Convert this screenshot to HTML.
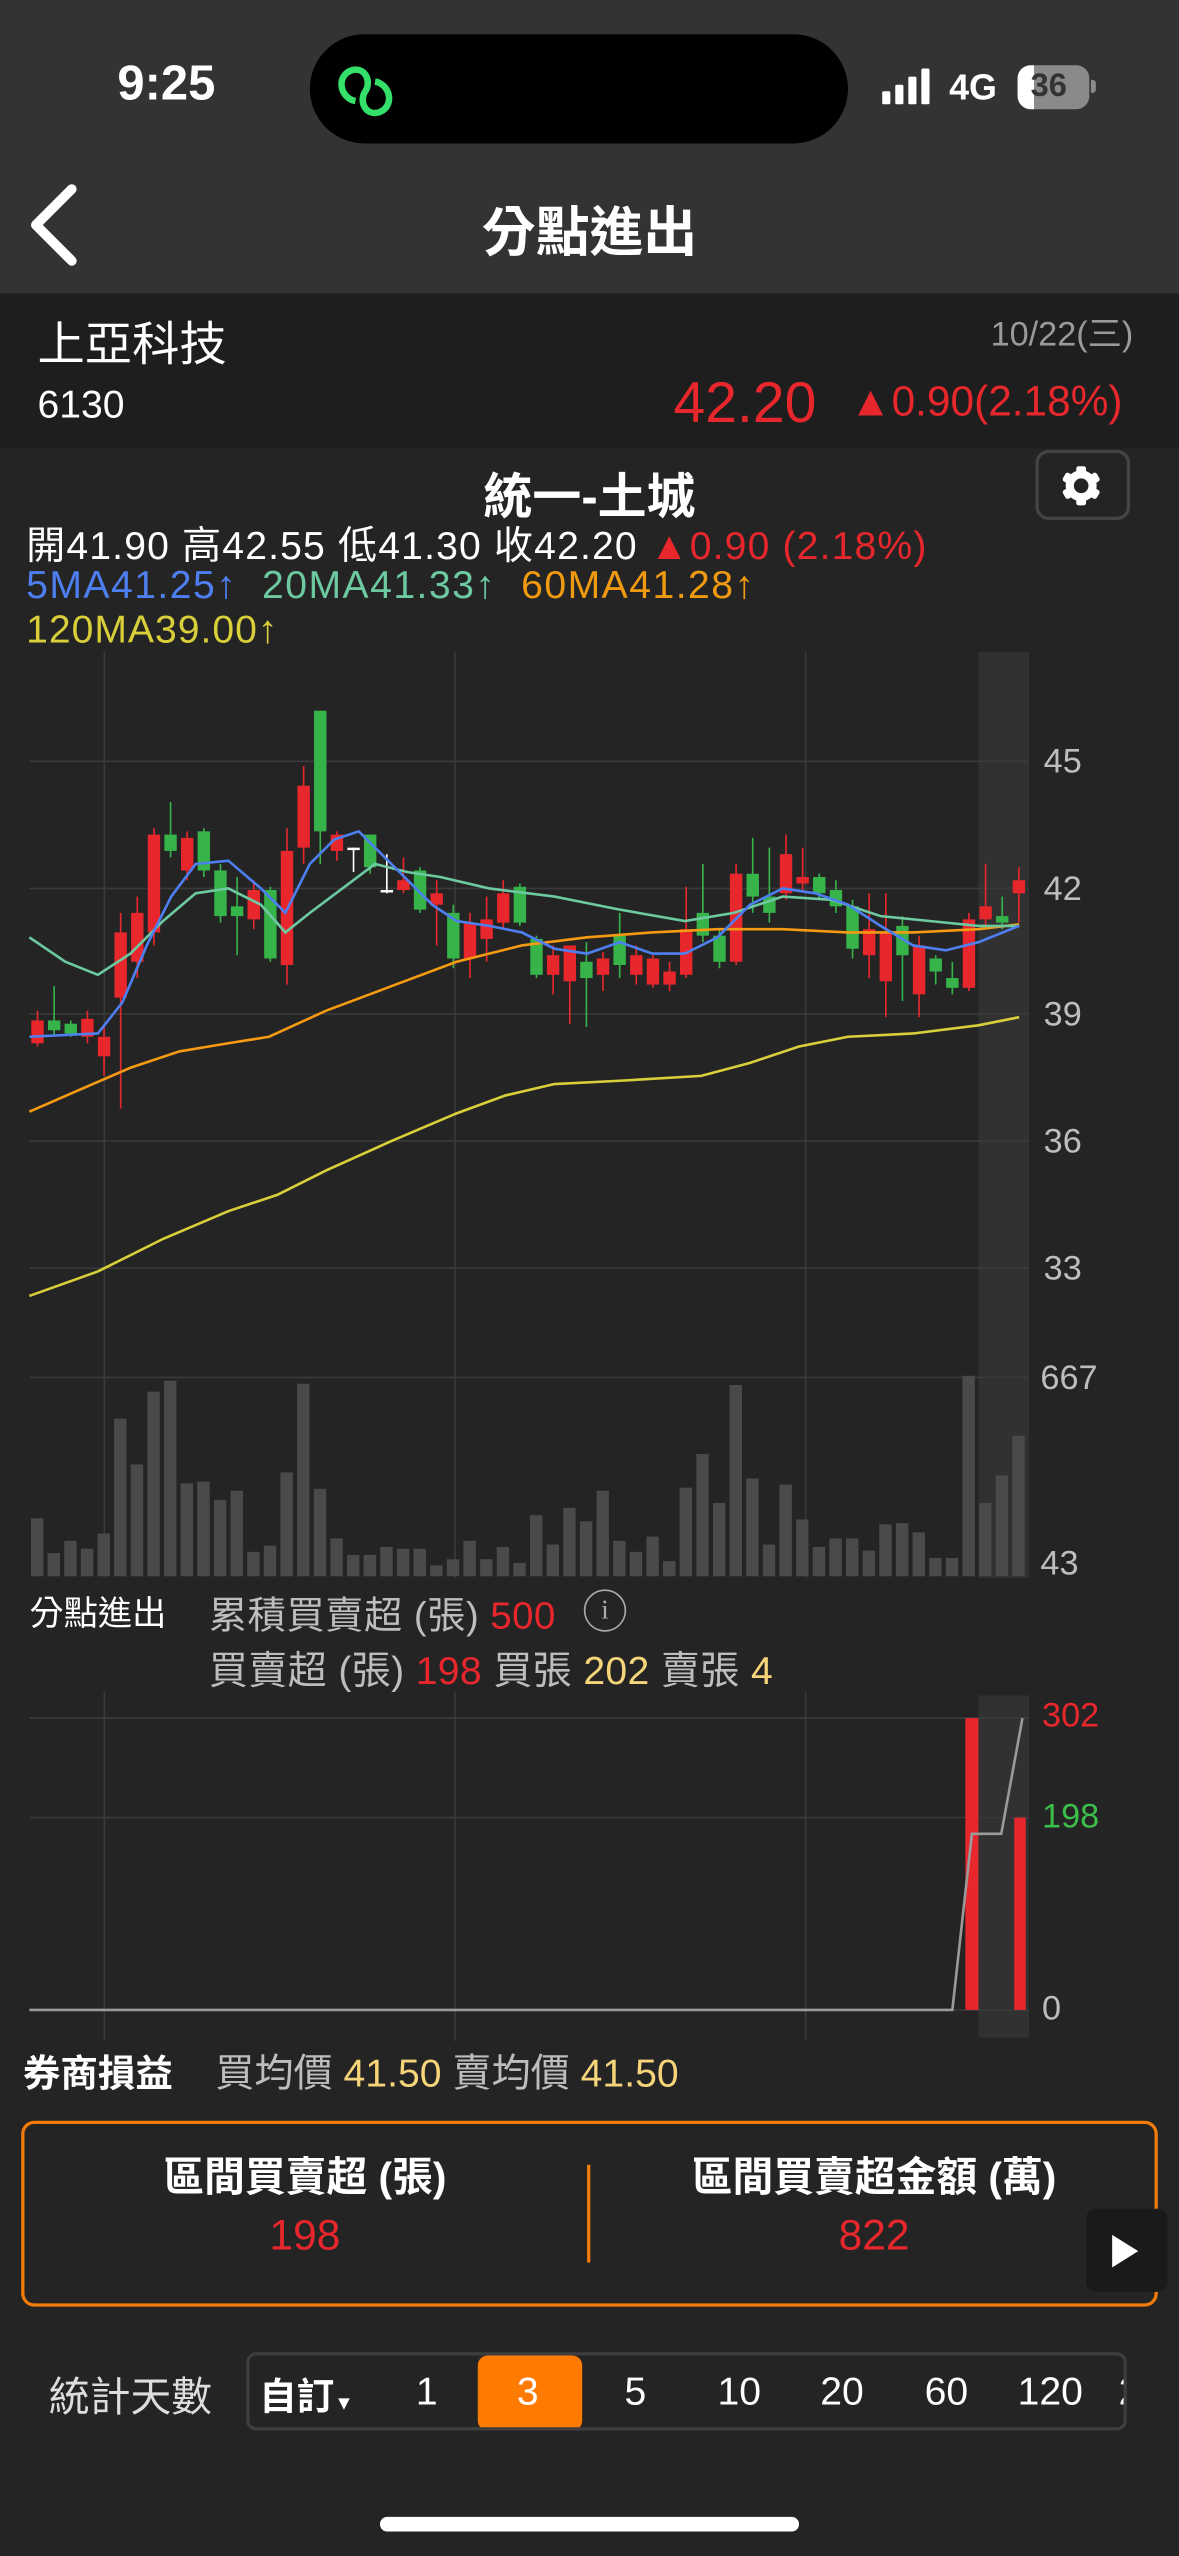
<!DOCTYPE html>
<html><head><meta charset="utf-8">
<style>
*{margin:0;padding:0;box-sizing:border-box}
html,body{width:1179px;height:2556px;overflow:hidden;background:#242424}
#w{position:absolute;left:0;top:0;width:723px;height:1568px;transform-origin:0 0;transform:scale(1.63071,1.6301);background:#242424;font-family:"Liberation Sans","Noto Sans CJK TC",sans-serif;color:#fff}
.a{position:absolute;white-space:nowrap}
.r{color:#e8272d}.y{color:#f5d47a}.g{color:#bdbdbd}
</style></head><body><div id="w">
<div class="a" style="left:0;top:0;width:723px;height:180px;background:#333"></div>
<div class="a" style="left:72px;top:35px;font-size:30px;font-weight:bold">9:25</div>
<div class="a" style="left:190px;top:21px;width:330px;height:67px;border-radius:34px;background:#000"></div>
<svg class="a" style="left:204px;top:38px" width="44" height="36" viewBox="0 0 44 36"><g fill="none" stroke="#35e06a" stroke-width="4"><path d="M14 24 C4 22 2 8 12 5 C20 3 24 12 20 18"/><path d="M26 12 C36 14 38 28 28 31 C20 33 16 24 20 18"/></g></svg>
<svg class="a" style="left:540px;top:42px" width="36" height="22"><rect x="1" y="14" width="5" height="8" rx="1" fill="#fff"/><rect x="9" y="10" width="5" height="12" rx="1" fill="#fff"/><rect x="17" y="5" width="5" height="17" rx="1" fill="#fff"/><rect x="25" y="0" width="5" height="22" rx="1" fill="#fff"/></svg>
<div class="a" style="left:582px;top:41px;font-size:22px;font-weight:bold">4G</div>
<div class="a" style="left:624px;top:40px;width:44px;height:27px;border-radius:8px;background:linear-gradient(90deg,#fff 0,#fff 10px,#8a8a8a 10px)"></div>
<div class="a" style="left:632px;top:42px;font-size:20px;font-weight:bold;color:#333">36</div>
<div class="a" style="left:669px;top:49px;width:3px;height:8px;background:#8a8a8a;border-radius:0 2px 2px 0"></div>
<svg class="a" style="left:14px;top:112px" width="34" height="52"><path d="M30 4 L8 26 L30 48" fill="none" stroke="#fff" stroke-width="6" stroke-linecap="round" stroke-linejoin="round"/></svg>
<div class="a" style="left:0;width:723px;text-align:center;top:116px;font-size:33px;font-weight:bold">分點進出</div>
<div class="a" style="left:0;top:180px;width:723px;height:95px;background:#1e1e1e"></div>
<div class="a" style="left:23px;top:188px;font-size:29px">上亞科技</div>
<div class="a" style="left:23px;top:235px;font-size:24px">6130</div>
<div class="a g" style="right:28px;top:189px;font-size:21px;color:#9a9a9a">10/22(三)</div>
<div class="a r" style="left:413px;top:228px;font-size:35px">42.20</div>
<div class="a r" style="left:521px;top:231px;font-size:26px">▲0.90(2.18%)</div>
<div class="a" style="left:0;width:723px;text-align:center;top:280px;font-size:30px;font-weight:bold">統一-土城</div>
<div class="a" style="left:635px;top:276px;width:58px;height:43px;border:2px solid #444;border-radius:8px"></div>
<svg class="a" style="left:649px;top:284px" width="28" height="28" viewBox="0 0 28 28"><g fill="#fff"><circle cx="14" cy="14" r="9.5"/><g id="t"><rect x="11" y="2" width="6" height="24" rx="1.5"/></g><use href="#t" transform="rotate(60 14 14)"/><use href="#t" transform="rotate(120 14 14)"/></g><circle cx="14" cy="14" r="4.5" fill="#242424"/></svg>
<div class="a" style="left:16px;top:315px;font-size:24px;letter-spacing:0.7px">開41.90 高42.55 低41.30 收42.20 <span class="r">▲0.90 (2.18%)</span></div>
<div class="a" style="left:16px;top:346px;font-size:24px;letter-spacing:0.9px"><span style="color:#4e7ff0">5MA41.25↑</span>&nbsp; <span style="color:#6cc9a0">20MA41.33↑</span>&nbsp; <span style="color:#f09a10">60MA41.28↑</span></div>
<div class="a" style="left:16px;top:373px;font-size:24px;letter-spacing:0.6px;color:#d8cf3a">120MA39.00↑</div>
<svg id="ch" class="a" style="left:0;top:395px" width="723" height="860" viewBox="0 395 723 860"></svg>
<div class="a g" style="left:640px;top:456px;font-size:21px">45</div>
<div class="a g" style="left:640px;top:534px;font-size:21px">42</div>
<div class="a g" style="left:640px;top:611px;font-size:21px">39</div>
<div class="a g" style="left:640px;top:689px;font-size:21px">36</div>
<div class="a g" style="left:640px;top:767px;font-size:21px">33</div>
<div class="a g" style="left:638px;top:834px;font-size:21px">667</div>
<div class="a g" style="left:638px;top:948px;font-size:21px">43</div>
<div class="a" style="left:18px;top:974px;font-size:21px">分點進出</div>
<div class="a g" style="left:128px;top:972px;font-size:23.5px;letter-spacing:0.3px">累積買賣超 (張) <span class="r">500</span></div>
<div class="a" style="left:358px;top:975px;width:26px;height:26px;border:1.5px solid #aaa;border-radius:50%;color:#aaa;font-size:17px;text-align:center;line-height:23px;font-family:'Liberation Serif',serif">i</div>
<div class="a g" style="left:128px;top:1005px;font-size:24px;letter-spacing:0.2px">買賣超 (張) <span class="r">198</span> 買張 <span class="y">202</span> 賣張 <span class="y">4</span></div>
<div class="a r" style="left:639px;top:1041px;font-size:21px">302</div>
<div class="a" style="left:639px;top:1103px;font-size:21px;color:#3cbf4a">198</div>
<div class="a g" style="left:639px;top:1221px;font-size:21px">0</div>
<div class="a" style="left:14px;top:1253px;font-size:23px;font-weight:bold">券商損益</div>
<div class="a g" style="left:132px;top:1252px;font-size:24px">買均價 <span class="y">41.50</span> 賣均價 <span class="y">41.50</span></div>
<div class="a" style="left:13px;top:1301px;width:697px;height:114px;border:2px solid #f27c0a;border-radius:8px"></div>
<div class="a" style="left:360px;top:1328px;width:2px;height:60px;background:#f27c0a"></div>
<div class="a" style="left:13px;width:348px;text-align:center;top:1316px;font-size:25px;font-weight:bold">區間買賣超 (張)</div>
<div class="a r" style="left:13px;width:348px;text-align:center;top:1356px;font-size:26px">198</div>
<div class="a" style="left:362px;width:348px;text-align:center;top:1316px;font-size:25px;font-weight:bold">區間買賣超金額 (萬)</div>
<div class="a r" style="left:362px;width:348px;text-align:center;top:1356px;font-size:26px">822</div>
<div class="a" style="left:666px;top:1355px;width:50px;height:51px;background:#1a1a1a;border-radius:6px"></div>
<svg class="a" style="left:680px;top:1369px" width="20" height="24"><path d="M2 2 L18 12 L2 22Z" fill="#fff"/></svg>
<div class="a" style="left:30px;top:1451px;font-size:25px;color:#ddd">統計天數</div>
<div class="a" style="left:151px;top:1443px;width:540px;height:48px;border:2px solid #3e3e3e;border-radius:6px;overflow:hidden">
<div class="a" style="left:140px;top:0;width:64px;height:46px;background:#ff7a00;border-radius:6px"></div>
<div class="a" style="left:6px;top:6px;font-size:23px;font-weight:bold">自訂<span style="font-size:12px">▼</span></div>
<div class="a" style="left:102px;top:9px;font-size:24px">1</div>
<div class="a" style="left:164px;top:9px;font-size:24px">3</div>
<div class="a" style="left:230px;top:9px;font-size:24px">5</div>
<div class="a" style="left:287px;top:9px;font-size:24px">10</div>
<div class="a" style="left:350px;top:9px;font-size:24px">20</div>
<div class="a" style="left:414px;top:9px;font-size:24px">60</div>
<div class="a" style="left:471px;top:9px;font-size:24px">120</div>
<div class="a" style="left:533px;top:9px;font-size:24px">2</div>
</div>
<div class="a" style="left:233px;top:1544px;width:257px;height:9px;border-radius:5px;background:#fff"></div>
</div>
<script>
var s='';
s+='<rect x="600" y="400" width="31" height="568" fill="#313131"/>';
s+='<rect x="600" y="1040" width="31" height="210" fill="#313131"/>';
[64,279,494].forEach(function(x){s+='<line x1="'+x+'" y1="400" x2="'+x+'" y2="968" stroke="#3a3a3a"/><line x1="'+x+'" y1="1038" x2="'+x+'" y2="1252" stroke="#3a3a3a"/>';});
[467,545,622,700,778,845].forEach(function(y){s+='<line x1="18" y1="'+y+'" x2="631" y2="'+y+'" stroke="#3a3a3a"/>';});
[1054,1115,1233].forEach(function(y){s+='<line x1="18" y1="'+y+'" x2="631" y2="'+y+'" stroke="#3a3a3a"/>';});
var v=[95,38,58,45,70,258,183,302,320,152,155,125,140,40,50,170,315,143,62,35,35,48,45,45,18,28,58,28,48,22,100,52,112,90,140,58,40,65,25,145,200,120,313,160,52,150,93,48,62,62,42,85,87,72,30,30,328,120,165,230];
v.forEach(function(h,i){var x=19+i*10.2,hh=h*0.375;s+='<rect x="'+x+'" y="'+(967-hh)+'" width="7.6" height="'+hh+'" fill="#4a4a4a"/>';});
var c=[[626,640,620,642,'r'],[626,632,605,636,'g'],[628,634,626,636,'g'],[625,636,620,640,'r'],[636,648,630,660,'r'],[572,612,560,680,'r'],[560,590,550,600,'r'],[512,572,508,580,'r'],[512,522,492,526,'g'],[514,534,510,540,'r'],[510,534,508,538,'g'],[534,562,530,566,'g'],[556,562,538,586,'g'],[546,564,540,570,'r'],[546,588,544,590,'g'],[522,592,508,604,'r'],[482,520,470,530,'r'],[436,510,436,530,'g'],[512,522,510,528,'r'],[520,521,520,535,'w'],[512,532,512,536,'g'],[546,547,524,548,'w'],[540,546,526,548,'r'],[534,558,532,560,'g'],[548,555,540,580,'r'],[560,588,555,594,'g'],[566,588,560,600,'r'],[564,576,550,590,'r'],[548,566,540,570,'r'],[544,566,542,568,'g'],[576,598,574,600,'g'],[586,598,580,610,'r'],[580,602,580,628,'r'],[590,600,578,630,'g'],[588,598,584,608,'r'],[574,592,560,600,'g'],[586,598,580,604,'r'],[588,604,586,606,'r'],[596,604,590,608,'r'],[570,598,544,600,'r'],[560,574,530,578,'g'],[574,590,570,594,'g'],[536,590,530,592,'r'],[536,550,514,560,'g'],[550,560,520,566,'g'],[524,548,512,552,'r'],[538,542,520,546,'r'],[538,548,536,552,'g'],[546,556,540,560,'g'],[556,582,552,588,'g'],[570,586,548,600,'r'],[572,602,548,624,'r'],[568,586,562,614,'g'],[580,610,574,624,'r'],[588,596,586,604,'g'],[600,606,590,610,'g'],[564,606,560,608,'r'],[556,564,530,570,'r'],[562,566,550,570,'g'],[540,548,532,566,'r']];
c.forEach(function(d,i){var x=23+i*10.2,col=d[4]=='r'?'#e8272d':d[4]=='g'?'#36b44a':'#fff';s+='<line x1="'+x+'" y1="'+d[2]+'" x2="'+x+'" y2="'+d[3]+'" stroke="'+col+'" stroke-width="1"/><rect x="'+(x-3.8)+'" y="'+d[0]+'" width="7.6" height="'+Math.max(1.5,d[1]-d[0])+'" fill="'+col+'"/>';});
function pl(p,col){s+='<polyline points="'+p+'" fill="none" stroke="'+col+'" stroke-width="1.6"/>';}
pl('18,682 50,668 80,655 110,645 140,640 165,636 200,620 240,605 280,590 320,580 360,575 400,572 440,570 480,570 520,572 560,572 600,570 625,567','#f59a12');
pl('18,795 60,780 100,760 140,743 170,733 200,718 240,700 280,683 310,672 340,665 380,663 430,660 460,652 490,642 520,636 560,634 600,629 625,624','#d8cf3a');
pl('18,575 40,590 60,598 80,585 100,565 120,548 140,545 160,555 175,572 190,560 210,545 230,530 250,535 270,538 300,545 340,550 380,558 420,565 450,560 480,550 510,552 540,562 570,565 600,568 625,568','#6cc9a0');
pl('18,636 60,634 75,615 90,580 105,550 120,530 140,528 160,545 175,560 190,530 205,515 220,510 235,525 250,540 265,555 280,565 300,568 320,572 340,582 360,585 380,578 400,585 420,585 440,575 460,555 480,545 500,548 520,555 540,568 560,580 580,583 600,578 625,568','#4e7ff0');
s+='<rect x="592" y="1054" width="8" height="179" fill="#e8272d"/><rect x="622" y="1115" width="7" height="118" fill="#e8272d"/>';
s+='<polyline points="18,1233 584,1233 596,1125 614,1125 627,1054" fill="none" stroke="#9a9a9a" stroke-width="1.6"/>';
document.getElementById('ch').innerHTML=s;
</script>
</body></html>
